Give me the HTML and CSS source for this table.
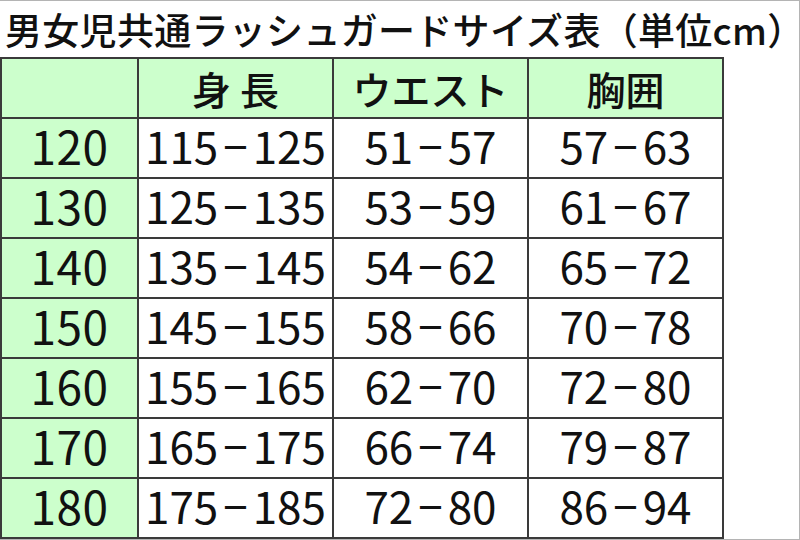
FILE: index.html
```html
<!DOCTYPE html>
<html lang="ja">
<head>
<meta charset="utf-8">
<title>男女児共通ラッシュガードサイズ表</title>
<link rel="stylesheet" href="styles.css">
</head>
<body>
<div class="frame">
  <h1 class="title">男女児共通ラッシュガードサイズ表（単位cm）</h1>
  <div class="table">
    <div class="cell head"></div>
    <div class="cell head">身 長</div>
    <div class="cell head">ウエスト</div>
    <div class="cell head">胸囲</div>

    <div class="cell size">120</div>
    <div class="cell num">115<span class="dash">−</span>125</div>
    <div class="cell num">51<span class="dash">−</span>57</div>
    <div class="cell num">57<span class="dash">−</span>63</div>

    <div class="cell size">130</div>
    <div class="cell num">125<span class="dash">−</span>135</div>
    <div class="cell num">53<span class="dash">−</span>59</div>
    <div class="cell num">61<span class="dash">−</span>67</div>

    <div class="cell size">140</div>
    <div class="cell num">135<span class="dash">−</span>145</div>
    <div class="cell num">54<span class="dash">−</span>62</div>
    <div class="cell num">65<span class="dash">−</span>72</div>

    <div class="cell size">150</div>
    <div class="cell num">145<span class="dash">−</span>155</div>
    <div class="cell num">58<span class="dash">−</span>66</div>
    <div class="cell num">70<span class="dash">−</span>78</div>

    <div class="cell size">160</div>
    <div class="cell num">155<span class="dash">−</span>165</div>
    <div class="cell num">62<span class="dash">−</span>70</div>
    <div class="cell num">72<span class="dash">−</span>80</div>

    <div class="cell size">170</div>
    <div class="cell num">165<span class="dash">−</span>175</div>
    <div class="cell num">66<span class="dash">−</span>74</div>
    <div class="cell num">79<span class="dash">−</span>87</div>

    <div class="cell size">180</div>
    <div class="cell num">175<span class="dash">−</span>185</div>
    <div class="cell num">72<span class="dash">−</span>80</div>
    <div class="cell num">86<span class="dash">−</span>94</div>
  </div>
</div>
</body>
</html>
```
FILE: styles.css
```css
html, body {
  margin: 0;
  padding: 0;
  background: #ffffff;
}

.frame {
  box-sizing: border-box;
  width: 800px;
  height: 540px;
  border-top: 1px solid #b4b4b4;
  border-right: 1px solid #b4b4b4;
  border-bottom: 1px solid #b4b4b4;
  font-family: "Noto Sans CJK JP", "Noto Sans", sans-serif;
  color: #111111;
  display: flex;
  flex-direction: column;
}

.title {
  margin: 0;
  height: 56px;
  padding-left: 5px;
  font-size: 37px;
  font-weight: 500;
  line-height: 56px;
  letter-spacing: 0.3px;
}

.table {
  display: grid;
  grid-template-columns: 137px 195px 195px 195px;
  grid-auto-rows: 60px;
  width: max-content;
  border-top: 2px solid #3a3a3a;
  border-left: 2px solid #3a3a3a;
}

.cell {
  box-sizing: border-box;
  border-right: 2px solid #3a3a3a;
  border-bottom: 2px solid #3a3a3a;
  display: flex;
  align-items: center;
  justify-content: center;
  white-space: nowrap;
  line-height: 1;
}

.head {
  background: #ccffcc;
  font-size: 39px;
  font-weight: 500;
}

.size {
  background: #ccffcc;
  font-size: 46px;
  font-weight: 400;
  letter-spacing: 0.5px;
  padding-bottom: 6px;
}

.num {
  background: #ffffff;
  font-size: 44px;
  font-weight: 400;
  padding-bottom: 6px;
}

.dash {
  margin: 0 5px;
}
```
